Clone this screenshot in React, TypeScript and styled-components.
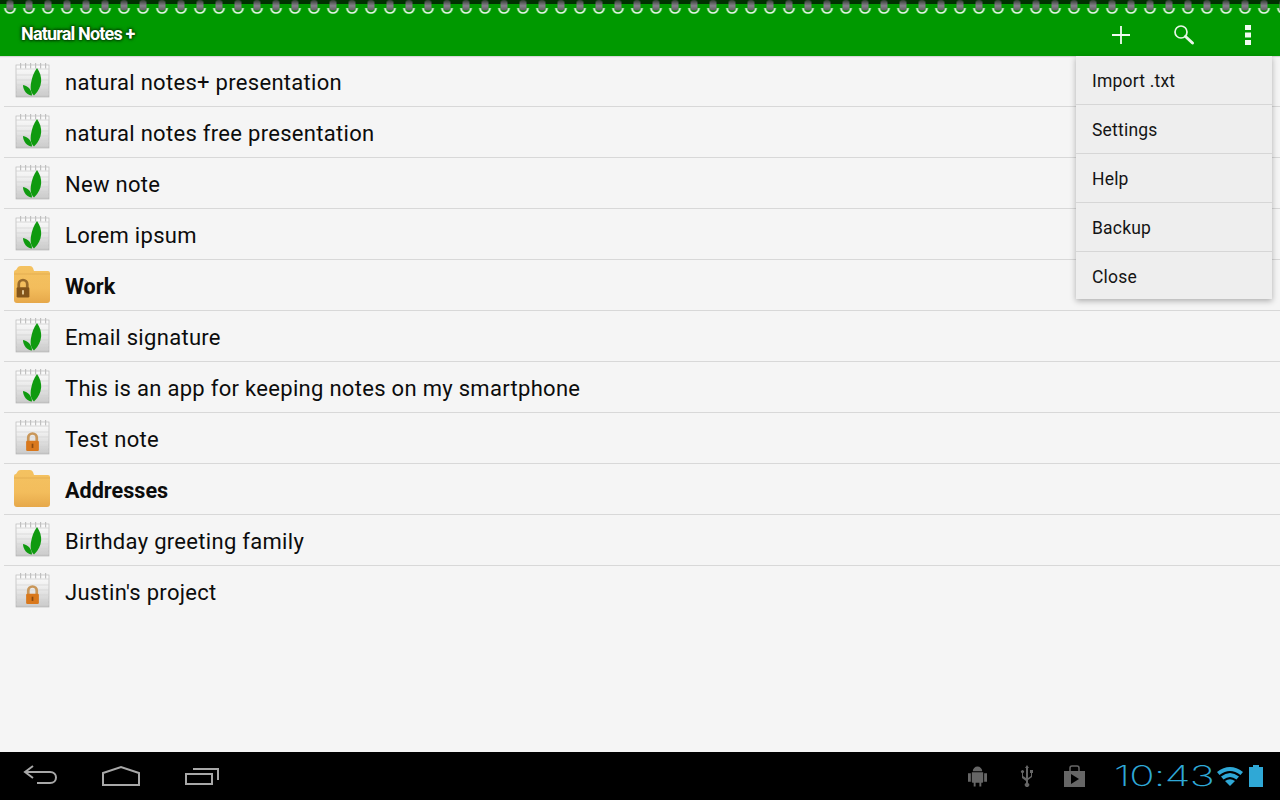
import React from "react";
import styled, { createGlobalStyle } from "styled-components";

const GlobalStyle = createGlobalStyle`
  html, body {
    margin: 0;
    padding: 0;
    background: #f5f5f5;
  }
  body {
    font-family: Roboto, "Liberation Sans", sans-serif;
  }
`;

type NoteKind = "leaf" | "lock" | "folder" | "lockedFolder";

const notes: { title: string; kind: NoteKind }[] = [
  { title: "natural notes+ presentation", kind: "leaf" },
  { title: "natural notes free presentation", kind: "leaf" },
  { title: "New note", kind: "leaf" },
  { title: "Lorem ipsum", kind: "leaf" },
  { title: "Work", kind: "lockedFolder" },
  { title: "Email signature", kind: "leaf" },
  { title: "This is an app for keeping notes on my smartphone", kind: "leaf" },
  { title: "Test note", kind: "lock" },
  { title: "Addresses", kind: "folder" },
  { title: "Birthday greeting family", kind: "leaf" },
  { title: "Justin's project", kind: "lock" },
];

const menuItems = ["Import .txt", "Settings", "Help", "Backup", "Close"];

const Page = styled.div`
  position: relative;
  width: 1280px;
  height: 800px;
  overflow: hidden;
  display: flex;
  flex-direction: column;
  background: #f5f5f5;
`;

const ActionBar = styled.header`
  position: relative;
  height: 56px;
  flex: none;
  display: flex;
  align-items: center;
  background: #009900;
  box-shadow: 0 1px 1px rgba(0, 0, 0, 0.12);
`;

const Coils = styled.svg`
  position: absolute;
  top: 0;
  left: 0;
`;

const AppTitle = styled.h1`
  margin: 10px 0 0 21px;
  font-size: 18px;
  font-weight: 700;
  letter-spacing: -0.82px;
  color: #ffffff;
  text-shadow: 0 0 3px #004400, 0 0 3px #004400, 0 0 2px #004400, 0 0 4px #005500;
`;

const Actions = styled.div`
  margin-left: auto;
  margin-top: 14px;
  margin-right: 28px;
  display: flex;
  align-items: center;
`;

const ActionIcon = styled.svg<{ $gap?: number }>`
  display: block;
  margin-left: ${({ $gap }) => $gap ?? 0}px;
`;

const List = styled.main`
  flex: 1;
  min-height: 0;
`;

const Row = styled.div`
  height: 51px;
  box-sizing: border-box;
  margin-left: 4px;
  padding-left: 10px;
  display: flex;
  align-items: center;
  gap: 15px;
  border-bottom: 1px solid #d8d8d8;
  &:last-child {
    border-bottom-color: transparent;
  }
`;

const IconFrame = styled.svg`
  display: block;
  flex: none;
  margin-top: -2px;
`;

const RowTitle = styled.span<{ $bold: boolean }>`
  margin-top: 2px;
  font-size: ${({ $bold }) => ($bold ? "21.6px" : "22px")};
  font-weight: ${({ $bold }) => ($bold ? 700 : 400)};
  letter-spacing: ${({ $bold }) => ($bold ? "0" : "0.3px")};
  color: #0c0c0c;
`;

const Overflow = styled.div`
  position: absolute;
  top: 56px;
  left: 1076px;
  width: 196px;
  background: #eeeeee;
  box-shadow: 0 2px 6px rgba(0, 0, 0, 0.3);
`;

const MenuItem = styled.div`
  height: 49px;
  box-sizing: border-box;
  padding: 2px 0 0 16px;
  display: flex;
  align-items: center;
  font-size: 17.5px;
  letter-spacing: 0.2px;
  color: #141414;
  border-bottom: 1px solid #d6d6d6;
  &:last-child {
    height: 47px;
    padding-top: 3px;
    border-bottom: none;
  }
`;

const NavBar = styled.footer`
  height: 48px;
  flex: none;
  display: flex;
  align-items: center;
  background: #000000;
`;

const NavButtons = styled.div`
  display: flex;
  align-items: center;
  gap: 44px;
  padding-left: 22px;
`;

const StatusArea = styled.div`
  margin-left: auto;
  margin-right: 17px;
  display: flex;
  align-items: center;
`;

const StatusIcon = styled.svg<{ $gap: number }>`
  display: block;
  margin-left: ${({ $gap }) => $gap}px;
`;

const Clock = styled.span`
  display: block;
  width: 98px;
  margin-left: 29px;
  font-family: Inter, Lato, sans-serif;
  font-size: 28px;
  font-weight: 200;
  line-height: 30px;
  letter-spacing: -0.5px;
  color: #2fa8d6;
  transform: scaleX(1.5);
  transform-origin: left center;
`;

function CoilStrip() {
  return (
    <Coils width={1280} height={16}>
      <defs>
        <linearGradient id="coilMetal" x1="0" y1="0" x2="0" y2="1">
          <stop offset="0" stopColor="#2f3a2f" />
          <stop offset="0.55" stopColor="#85808a" />
          <stop offset="1" stopColor="#5f5f5f" />
        </linearGradient>
        <pattern id="coil" x={0.5} y={0} width={19} height={16} patternUnits="userSpaceOnUse">
          <path d="M4.500 8a5 5 0 0 0 10 0" fill="none" stroke="#eef8ee" strokeWidth={1.7} />
          <rect x={6} y={0} width={7} height={10.500} rx={3} fill="url(#coilMetal)" />
        </pattern>
      </defs>
      <rect width={1280} height={4} fill="#013001" />
      <rect width={1280} height={16} fill="url(#coil)" />
    </Coils>
  );
}

function LockGlyph({ cx, cy, scale, dim }: { cx: number; cy: number; scale: number; dim?: boolean }) {
  return (
    <g transform={`translate(${cx} ${cy}) scale(${scale})`}>
      <path
        d="M-5-1v-4a5 5 0 0 1 10 0v4"
        fill="none"
        stroke={dim ? "#96692b" : "#c9975a"}
        strokeWidth={3.2}
      />
      <rect x={-7.5} y={-1.5} width={15} height={12} rx={1.5} fill={dim ? "#82541a" : "#d9781c"} />
      <rect x={-1} y={2} width={2} height={5} fill={dim ? "#f0d9a8" : "#8a4a10"} />
    </g>
  );
}

function NoteIcon({ kind }: { kind: NoteKind }) {
  if (kind === "folder" || kind === "lockedFolder") {
    return (
      <IconFrame width={36} height={37} viewBox="0 0 36 37">
        <defs>
          <linearGradient id="folderFill" x1="0" y1="0" x2="0" y2="1">
            <stop offset="0" stopColor="#f4c261" />
            <stop offset="0.6" stopColor="#f3bd5c" />
            <stop offset="1" stopColor="#e6a84a" />
          </linearGradient>
        </defs>
        <path
          d="M0 6q0-2 2-2L4 1q1-1 3-1h9q2 0 3 2l1 3h14q2 0 2 2v27q0 3-3 3H3q-3 0-3-3z"
          fill="url(#folderFill)"
        />
        <path d="M0 8h36" stroke="#d9a24a" strokeWidth={0.8} opacity={0.7} />
        {kind === "lockedFolder" && <LockGlyph cx={9} cy={22.5} scale={0.85} dim />}
      </IconFrame>
    );
  }
  return (
    <IconFrame width={36} height={36} viewBox="0 0 36 36">
      <defs>
        <linearGradient id="paperFill" x1="0" y1="0" x2="0" y2="1">
          <stop offset="0" stopColor="#fcfcfc" />
          <stop offset="0.35" stopColor="#efefef" />
          <stop offset="1" stopColor="#c8c8c8" />
        </linearGradient>
      </defs>
      <rect x={2} y={3} width={33} height={32} fill="url(#paperFill)" stroke="#b0b0b0" strokeWidth={0.6} />
      {[6, 11, 16, 21, 26, 31].map((x) => (
        <rect key={x} x={x} y={1} width={1.2} height={5.5} fill="#c0c0c0" />
      ))}
      <path d="M2 7h33" stroke="#d0d0d0" strokeWidth={0.8} />
      {[13, 18, 23, 28, 32].map((y) => (
        <path key={y} d={`M2 ${y}h33`} stroke="#d2d2d2" strokeWidth={0.7} />
      ))}
      {kind === "leaf" ? (
        <>
          <path d="M23 6C29 14 29 25 20 33.500C17 31 16 27 17 21C18 15 20 10 23 6z" fill="#0f9a0f" />
          <path d="M9 23C14 24 18 28 18 33.500C13 33.500 9 28 9 23z" fill="#0f9a0f" />
        </>
      ) : (
        <LockGlyph cx={18.5} cy={23} scale={0.85} />
      )}
    </IconFrame>
  );
}

export default function App() {
  return (
    <Page>
      <GlobalStyle />
      <ActionBar>
        <CoilStrip />
        <AppTitle>Natural Notes +</AppTitle>
        <Actions>
          <ActionIcon width={20} height={20} viewBox="0 0 20 20">
            <path d="M10 1v18M1 10h18" stroke="#f2fbf2" strokeWidth={1.8} />
          </ActionIcon>
          <ActionIcon $gap={42} width={22} height={22} viewBox="0 0 22 22">
            <circle cx={8} cy={8} r={6} fill="none" stroke="#e8f6e8" strokeWidth={1.7} />
            <path d="M12.500 12.500L19.500 19" stroke="#e8f6e8" strokeWidth={3} strokeLinecap="round" />
          </ActionIcon>
          <ActionIcon $gap={49} width={8} height={20} viewBox="0 0 8 20">
            <path d="M1 0h6v5H1zM1 7.500h6v5H1zM1 15h6v5H1z" fill="#f2fbf2" />
          </ActionIcon>
        </Actions>
      </ActionBar>

      <List>
        {notes.map((note) => (
          <Row key={note.title}>
            <NoteIcon kind={note.kind} />
            <RowTitle $bold={note.kind === "folder" || note.kind === "lockedFolder"}>
              {note.title}
            </RowTitle>
          </Row>
        ))}
      </List>

      <Overflow>
        {menuItems.map((item) => (
          <MenuItem key={item}>{item}</MenuItem>
        ))}
      </Overflow>

      <NavBar>
        <NavButtons>
          <svg width={36} height={24} viewBox="0 0 36 24" fill="none" stroke="#a8a8a8" strokeWidth={2}>
            <path d="M11 2L3 8l8 6M3 8h25c8 0 8 11 0 11H15" />
          </svg>
          <svg width={38} height={22} viewBox="0 0 38 22" fill="none" stroke="#a8a8a8" strokeWidth={2}>
            <path d="M1 20V8L19 2l18 6v12z" />
          </svg>
          <svg width={36} height={20} viewBox="0 0 36 20" fill="none" stroke="#a8a8a8" strokeWidth={2}>
            <path d="M2 8h26v10H2z" />
            <path d="M9 3h25v11" />
          </svg>
        </NavButtons>
        <StatusArea>
          <StatusIcon $gap={0} width={19} height={24} viewBox="0 0 20 24">
            <path
              d="M5 7a5 5 0 0 1 10 0zM4 8h12v10q0 1-1 1h-1v4h-2v-4H8v4H6v-4H5q-1 0-1-1zM0 9h3v9H0zM17 9h3v9h-3z"
              fill="#666666"
            />
          </StatusIcon>
          <StatusIcon $gap={33} width={14} height={22} viewBox="0 0 14 22">
            <path
              d="M7 0l2 3H8v10l3-2V8H10V5h3v3h-1v4l-4 3v3a2.200 2.200 0 1 1-2 0v-2l-4-3V8a1.500 1.500 0 1 1 1 0v3l3 2V3H5z"
              fill="#666666"
            />
          </StatusIcon>
          <StatusIcon $gap={30} width={21} height={22} viewBox="0 0 21 22">
            <path d="M0 6h21v16H0z" fill="#666666" />
            <path d="M6 6V3q0-2 2-2h5q2 0 2 2v3" fill="none" stroke="#666666" strokeWidth={1.5} />
            <path d="M7 9l8 5-8 5z" fill="#000000" />
          </StatusIcon>
          <Clock>10:43</Clock>
          <StatusIcon $gap={5} width={26} height={20} viewBox="0 0 26 20">
            <path d="M0 6Q13-4 26 6l-2.500 3Q13 1 2.500 9z" fill="#2fa8d6" />
            <path d="M4 10.500Q13 3.500 22 10.500l-2.500 3Q13 8.500 6.500 13.500z" fill="#2fa8d6" />
            <path d="M8 15q5-3.500 10 0l-5 5z" fill="#2fa8d6" />
          </StatusIcon>
          <StatusIcon $gap={6} width={14} height={22} viewBox="0 0 14 22">
            <path d="M4 0h6v2h4v20H0V2h4z" fill="#2fa8d6" />
          </StatusIcon>
        </StatusArea>
      </NavBar>
    </Page>
  );
}
